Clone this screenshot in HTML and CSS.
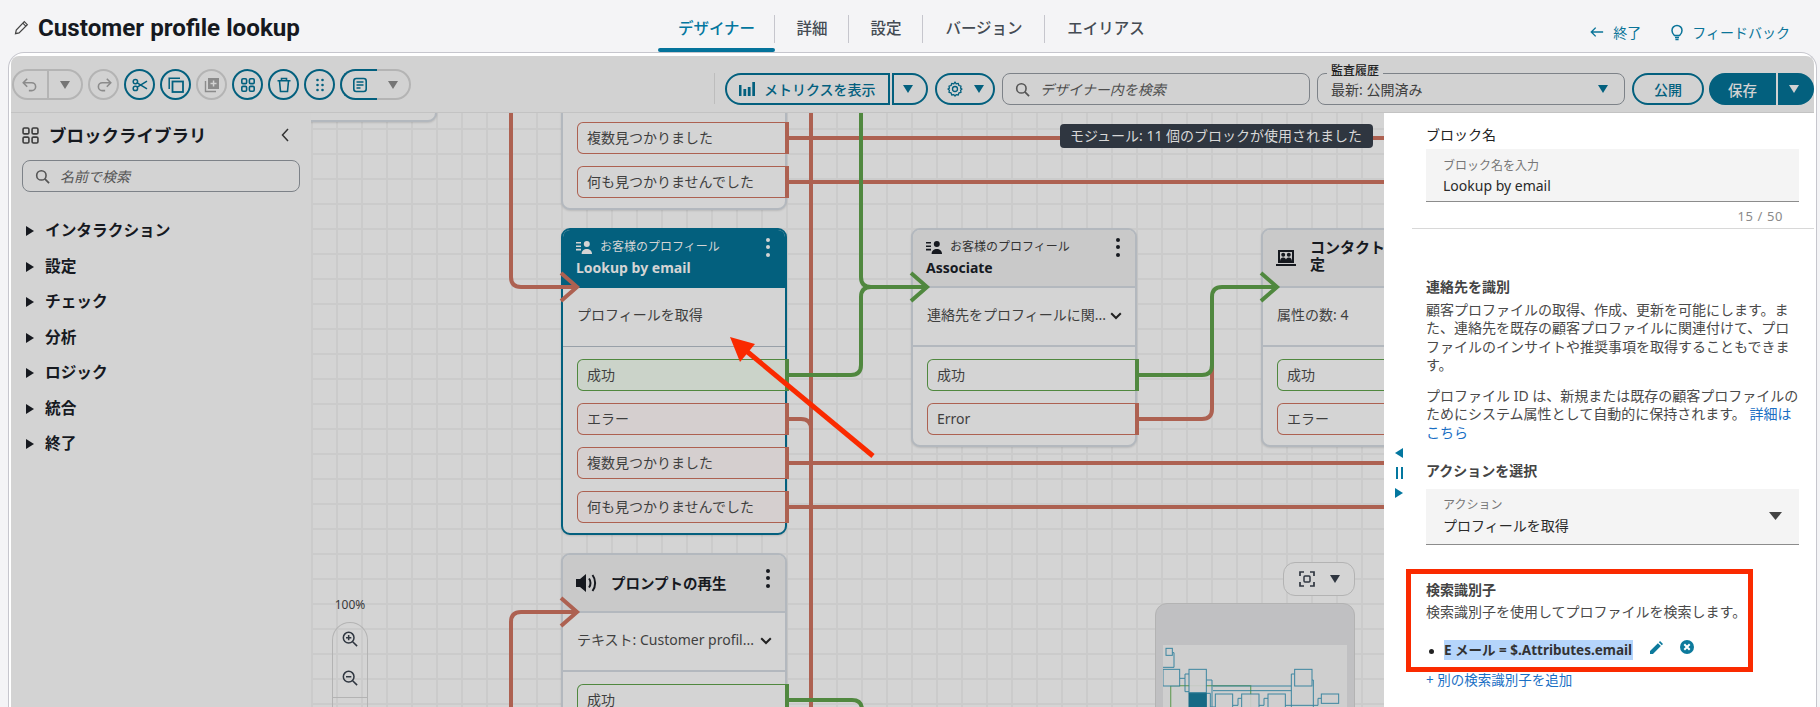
FILE: index.html
```html
<!DOCTYPE html>
<html lang="ja">
<head>
<meta charset="utf-8">
<title>Customer profile lookup</title>
<link rel="stylesheet" href="styles.css">
</head>
<body>
<svg class="defs" aria-hidden="true">
  <symbol id="i-person" viewBox="0 0 16 13"><path d="M0 1h5v1.6H0zM0 4.4h5V6H0zM0 7.8h5v1.6H0z"/><circle cx="10.8" cy="3" r="3"/><path d="M5.6 13c0-3.2 2.4-5 5.2-5s5.2 1.8 5.2 5z"/></symbol>
  <symbol id="i-search" viewBox="0 0 16 16"><circle cx="6.8" cy="6.8" r="5" fill="none" stroke="currentColor" stroke-width="1.7"/><path d="M10.5 10.5L15 15" stroke="currentColor" stroke-width="1.9" fill="none"/></symbol>
  <symbol id="i-tri" viewBox="0 0 10 8"><path d="M0 0h10L5 8z"/></symbol>
  <symbol id="i-chev" viewBox="0 0 12 8"><path d="M1.2 1.2L6 6l4.8-4.8" fill="none" stroke="currentColor" stroke-width="2"/></symbol>
</svg>

<header class="topbar">
  <div class="title-wrap">
    <svg class="title-pen" viewBox="0 0 16 16"><path d="M11 1.8l3.2 3.2L5.4 13.8 1.6 14.6l.8-3.8zM9.4 3.4l3.2 3.2" fill="none" stroke="#444" stroke-width="1.3"/></svg>
    <h1 class="title">Customer profile lookup</h1>
  </div>
  <nav class="tabs">
    <a class="tab active">デザイナー</a>
    <a class="tab">詳細</a>
    <a class="tab">設定</a>
    <a class="tab">バージョン</a>
    <a class="tab last">エイリアス</a>
  </nav>
  <div class="top-links">
    <a class="top-link"><svg viewBox="0 0 16 12"><path d="M15 6H2M6.5 1L1.5 6l5 5" fill="none" stroke="currentColor" stroke-width="1.6"/></svg>終了</a>
    <a class="top-link fb"><svg class="bulb" viewBox="0 0 12 17"><path d="M3.6 11.6C2.4 10.4 1 9.4 1 6.4a5 5 0 0 1 10 0c0 3-1.4 4-2.6 5.2zM4 13.4h4M4.4 15.6h3.2" fill="none" stroke="currentColor" stroke-width="1.5"/></svg>フィードバック</a>
  </div>
</header>

<main class="frame">
  <div class="toolbar">
    <div class="tb-left">
      <div class="split gray">
        <span class="seg"><svg class="ico-lg" viewBox="0 0 16 16"><path d="M5.500 2.500L2 6l3.500 3.500M2 6h7.500a3.500 3.500 0 0 1 0 7H7" fill="none" stroke="currentColor" stroke-width="1.400"/></svg></span>
        <span class="seg caret"><svg class="tri" viewBox="0 0 10 8"><use href="#i-tri"/></svg></span>
      </div>
      <span class="circle gray"><svg class="ico-lg" viewBox="0 0 16 16"><path d="M10.500 2.500L14 6l-3.500 3.500M14 6H6.500a3.500 3.500 0 0 0 0 7H9" fill="none" stroke="currentColor" stroke-width="1.400"/></svg></span>
      <span class="circle"><svg viewBox="0 0 16 16"><circle cx="3.400" cy="4.600" r="2.200" fill="none" stroke="currentColor" stroke-width="1.500"/><circle cx="3.400" cy="11.400" r="2.200" fill="none" stroke="currentColor" stroke-width="1.500"/><path d="M5.200 5.800L15 11.800M5.200 10.200L15 4.200" fill="none" stroke="currentColor" stroke-width="1.500"/></svg></span>
      <span class="circle"><svg viewBox="0 0 16 16"><path d="M1.200 12V1.200H12" fill="none" stroke="currentColor" stroke-width="1.500"/><rect x="4.500" y="4.500" width="10.500" height="10.500" fill="none" stroke="currentColor" stroke-width="1.800"/></svg></span>
      <span class="circle gray"><svg viewBox="0 0 16 16"><path d="M1.500 4v10.500H12" fill="none" stroke="currentColor" stroke-width="1.400"/><path fill="currentColor" fill-rule="evenodd" d="M4 1h11v11H4zM8.800 3.500v2.300H6.500v1.500h2.300v2.300h1.500V7.300h2.200V5.800h-2.200V3.500z"/></svg></span>
      <span class="circle"><svg viewBox="0 0 16 16"><g fill="none" stroke="currentColor" stroke-width="1.600"><rect x="1.800" y="1.800" width="4.800" height="4.800" rx="1.200"/><rect x="9.400" y="1.800" width="4.800" height="4.800" rx="1.200"/><rect x="1.800" y="9.400" width="4.800" height="4.800" rx="1.200"/><rect x="9.400" y="9.400" width="4.800" height="4.800" rx="1.200"/></g></svg></span>
      <span class="circle"><svg viewBox="0 0 16 16"><path d="M1.500 3.800h13M5.500 3.500V1.500h5v2M3.500 4l1 10.500h7l1-10.500" fill="none" stroke="currentColor" stroke-width="1.600"/></svg></span>
      <span class="circle"><svg viewBox="0 0 16 16"><g fill="currentColor"><circle cx="5.500" cy="3" r="1.300"/><circle cx="10.500" cy="3" r="1.300"/><circle cx="5.500" cy="8" r="1.300"/><circle cx="10.500" cy="8" r="1.300"/><circle cx="5.500" cy="13" r="1.300"/><circle cx="10.500" cy="13" r="1.300"/></g></svg></span>
      <div class="split notes">
        <span class="seg active"><svg viewBox="0 0 16 16"><rect x="1.800" y="1.500" width="12.400" height="13" rx="2.500" fill="none" stroke="currentColor" stroke-width="1.600"/><path d="M4.500 5h7M4.500 8h7M4.500 11h4" stroke="currentColor" stroke-width="1.400"/></svg></span>
        <span class="seg caret"><svg class="tri" viewBox="0 0 10 8"><use href="#i-tri"/></svg></span>
      </div>
    </div>
    <div class="tb-right">
      <span class="vsep"></span>
      <div class="metrics">
        <span class="m-main"><svg viewBox="0 0 16 14"><path fill="currentColor" d="M0 3h2.500v11H0zM4.400 7h2.800v7H4.400zM8.800 5h2.800v9H8.800zM13.300 0H16v14h-2.700z"/></svg>メトリクスを表示</span>
        <span class="m-drop"><svg class="tri" viewBox="0 0 10 8"><use href="#i-tri"/></svg></span>
      </div>
      <span class="gear"><svg viewBox="0 0 16 16"><path d="M8 1l1.200 1.800 2.100-.4.600 2.100 2.100.6-.4 2.100L15 8l-1.400 1.200.4 2.100-2.100.6-.6 2.100-2.100-.4L8 15l-1.200-1.400-2.100.4-.6-2.100-2.100-.6.4-2.100L1 8l1.400-.8-.4-2.100 2.100-.6.600-2.100 2.100.4z" fill="none" stroke="currentColor" stroke-width="1.300" stroke-linejoin="round"/><circle cx="8" cy="8" r="2.500" fill="none" stroke="currentColor" stroke-width="1.300"/></svg><svg class="tri" viewBox="0 0 10 8"><use href="#i-tri"/></svg></span>
      <div class="field search-main"><svg class="s-ico" viewBox="0 0 16 16"><use href="#i-search"/></svg><em>デザイナー内を検索</em></div>
      <div class="field audit"><span class="legend">監査履歴</span><span>最新: 公開済み</span><svg class="tri" viewBox="0 0 10 8"><use href="#i-tri"/></svg></div>
      <span class="publish">公開</span>
      <div class="save"><span class="save-main">保存</span><span class="save-drop"><svg class="tri" viewBox="0 0 10 8"><use href="#i-tri"/></svg></span></div>
    </div>
  </div>

  <div class="work">
    <aside class="library">
      <div class="lib-head">
        <svg class="lib-ico" viewBox="0 0 16 16"><g fill="none" stroke="currentColor" stroke-width="1.500"><rect x="1" y="1" width="5.500" height="5.500" rx="1.200"/><rect x="9.500" y="1" width="5.500" height="5.500" rx="1.200"/><rect x="1" y="9.500" width="5.500" height="5.500" rx="1.200"/><rect x="9.500" y="9.500" width="5.500" height="5.500" rx="1.200"/></g></svg>
        <h2>ブロックライブラリ</h2>
        <svg class="lib-back" viewBox="0 0 8 14"><path d="M7 1L1.500 7 7 13" fill="none" stroke="currentColor" stroke-width="1.500"/></svg>
      </div>
      <div class="lib-search"><svg class="s-ico" viewBox="0 0 16 16"><use href="#i-search"/></svg><em>名前で検索</em></div>
      <ul class="lib-list">
        <li>インタラクション</li>
        <li>設定</li>
        <li>チェック</li>
        <li>分析</li>
        <li>ロジック</li>
        <li>統合</li>
        <li>終了</li>
      </ul>
    </aside>

    <section class="canvas">
      <article class="node sliver"></article>

      <article class="node tail">
        <ul class="outs">
          <li class="out bad">複数見つかりました</li>
          <li class="out bad">何も見つかりませんでした</li>
        </ul>
      </article>

      <article class="node selected n-lookup">
        <header class="node-head">
          <div class="head-line"><svg class="ico-person"><use href="#i-person"/></svg><span class="node-type">お客様のプロフィール</span><span class="kebab"><i></i><i></i><i></i></span></div>
          <strong class="node-name">Lookup by email</strong>
        </header>
        <div class="node-body">プロフィールを取得</div>
        <ul class="outs">
          <li class="out ok tint">成功</li>
          <li class="out bad tint">エラー</li>
          <li class="out bad tint">複数見つかりました</li>
          <li class="out bad tint">何も見つかりませんでした</li>
        </ul>
      </article>

      <article class="node n-assoc">
        <header class="node-head">
          <div class="head-line"><svg class="ico-person"><use href="#i-person"/></svg><span class="node-type">お客様のプロフィール</span><span class="kebab"><i></i><i></i><i></i></span></div>
          <strong class="node-name">Associate</strong>
        </header>
        <div class="node-body split-body"><span>連絡先をプロフィールに関...</span><svg class="chev" viewBox="0 0 12 8"><use href="#i-chev"/></svg></div>
        <ul class="outs">
          <li class="out ok">成功</li>
          <li class="out bad">Error</li>
        </ul>
      </article>

      <article class="node n-attr">
        <header class="node-head single">
          <svg class="ico-attr" viewBox="0 0 20 16"><path d="M3 1h14v11H3z" fill="none" stroke="currentColor" stroke-width="2"/><circle cx="7.200" cy="4.800" r="2"/><circle cx="12.800" cy="4.800" r="2"/><path d="M4 11.500c0-2.500 1.400-4 3.200-4s3.200 1.500 3.200 4zM9.600 11.500c0-2.500 1.400-4 3.200-4s3.200 1.500 3.200 4zM0 14h20v2H0z"/></svg>
          <strong class="node-title attr-title">コンタクト属性を設定</strong>
        </header>
        <div class="node-body">属性の数: 4</div>
        <ul class="outs">
          <li class="out ok">成功</li>
          <li class="out bad">エラー</li>
        </ul>
      </article>

      <article class="node n-prompt">
        <header class="node-head single">
          <svg class="ico-sound" viewBox="0 0 22 22"><path d="M0 7h4l6-5v18l-6-5H0z"/><path d="M13 6.500c2 2.500 2 6.500 0 9M16.500 3c3.500 4.500 3.500 11.500 0 16" fill="none" stroke="currentColor" stroke-width="2"/></svg>
          <strong class="node-title">プロンプトの再生</strong>
          <span class="kebab"><i></i><i></i><i></i></span>
        </header>
        <div class="node-body split-body"><span>テキスト: Customer profil...</span><svg class="chev" viewBox="0 0 12 8"><use href="#i-chev"/></svg></div>
        <ul class="outs">
          <li class="out ok">成功</li>
        </ul>
      </article>

      <svg class="wires" viewBox="311 113 1073 594">
        <g class="red">
          <path d="M511 113V277Q511 287 521 287H576"/>
          <path d="M561 273L577 287L561 301"/>
          <path d="M811 113V707"/>
          <path d="M789 138H1384M789 182H1384"/>
          <path d="M789 419H801Q811 419 811 429"/>
          <path d="M789 463H1384M789 507H1384"/>
          <path d="M1139 419H1202Q1212 419 1212 409V365"/>
          <path d="M511 707V622Q511 612 521 612H576"/>
          <path d="M561 598L577 612L561 626"/>
        </g>
        <g class="green">
          <path d="M789 375H851Q861 375 861 365V297Q861 287 871 287H926"/>
          <path d="M861 113V277Q861 287 871 287"/>
          <path d="M911 273L927 287L911 301"/>
          <path d="M1139 375H1202Q1212 375 1212 365V297Q1212 287 1222 287H1276"/>
          <path d="M1261 273L1277 287L1261 301"/>
          <path d="M789 700H852Q862 700 862 710"/>
        </g>
      </svg>

      <div class="tooltip">モジュール: 11 個のブロックが使用されました</div>

      <div class="zoom-box">
        <span class="zoom-pct">100%</span>
        <div class="zoom-ctrl">
          <span><svg viewBox="0 0 18 18"><circle cx="7.500" cy="7.500" r="6" fill="none" stroke="currentColor" stroke-width="1.700"/><path d="M12 12l5 5M7.500 4.500v6M4.500 7.500h6" stroke="currentColor" stroke-width="1.700"/></svg></span>
          <span><svg viewBox="0 0 18 18"><circle cx="7.500" cy="7.500" r="6" fill="none" stroke="currentColor" stroke-width="1.700"/><path d="M12 12l5 5M4.500 7.500h6" stroke="currentColor" stroke-width="1.700"/></svg></span>
          <span class="zoom-rest"></span>
        </div>
      </div>

      <div class="fit-btn">
        <svg viewBox="0 0 16 16"><path d="M1 5V1h4M11 1h4v4M15 11v4h-4M5 15H1v-4" fill="none" stroke="currentColor" stroke-width="1.700"/><rect x="5" y="5" width="6" height="6" rx="1" fill="none" stroke="currentColor" stroke-width="1.500"/></svg>
        <svg class="tri" viewBox="0 0 10 8"><use href="#i-tri"/></svg>
      </div>

      <div class="minimap">
        <svg viewBox="190 285 552 186" preserveAspectRatio="none">
          <g class="mm-g"><rect x="213" y="407" width="240" height="70"/></g>
          <g class="mm-t">
            <path d="M218 308H223V352H190"/>
            <path d="M240 385H256V372H268M256 385V425H268"/>
            <path d="M320 390H337V471M340 408H575M340 422H575M575 372V471M575 372H585M637 390H641V471M555 466H655V445H665M320 430H332V471H347M400 466H415V445H426M478 466H493V445H505"/>
            <rect x="199" y="295" width="19" height="21" class="mm-b"/>
            <rect x="190" y="358" width="50" height="50" class="mm-b"/>
            <rect x="268" y="358" width="52" height="70" class="mm-b"/>
            <rect x="268" y="430" width="52" height="50" class="mm-on"/>
            <rect x="347" y="432" width="52" height="50" class="mm-b"/>
            <rect x="426" y="432" width="52" height="50" class="mm-b"/>
            <rect x="505" y="432" width="52" height="50" class="mm-b"/>
            <rect x="585" y="358" width="52" height="50" class="mm-b"/>
            <rect x="665" y="432" width="52" height="28" class="mm-b"/>
          </g>
        </svg>
      </div>

      <svg class="callout" viewBox="311 113 1073 594">
        <path class="callout-shaft" d="M873 456L744 349"/>
        <path class="callout-head" d="M730 337L755 344L740 362z"/>
      </svg>
    </section>

    <aside class="panel">
      <div class="grip">
        <svg viewBox="0 0 8 10"><path d="M8 0v10L0 5z"/></svg>
        <span class="grip-bars"></span>
        <svg viewBox="0 0 8 10"><path d="M0 0v10l8-5z"/></svg>
      </div>
      <div class="panel-sec name-sec">
        <label class="plain-label">ブロック名</label>
        <div class="filled-input">
          <span class="mini-label">ブロック名を入力</span>
          <span class="filled-value">Lookup by email</span>
        </div>
        <div class="counter">15 / 50</div>
      </div>
      <div class="panel-sec info-sec">
        <h3 class="sec-h">連絡先を識別</h3>
        <p class="para">顧客プロファイルの取得、作成、更新を可能にします。また、連絡先を既存の顧客プロファイルに関連付けて、プロファイルのインサイトや推奨事項を取得することもできます。</p>
        <p class="para second">プロファイル ID は、新規または既存の顧客プロファイルのためにシステム属性として自動的に保持されます。 <a class="link">詳細はこちら</a></p>
        <h3 class="sec-h act-h">アクションを選択</h3>
        <div class="filled-input select">
          <span class="mini-label">アクション</span>
          <span class="filled-value">プロフィールを取得</span>
          <svg class="tri sel-tri" viewBox="0 0 10 8" preserveAspectRatio="none"><use href="#i-tri"/></svg>
        </div>
        <div class="redbox">
          <h3 class="sec-h">検索識別子</h3>
          <p class="para">検索識別子を使用してプロファイルを検索します。</p>
          <div class="ident">
            <span class="bullet"></span>
            <span class="hl">E メール = $.Attributes.email</span>
            <svg class="ident-pen" viewBox="0 0 14 14"><path d="M0 14V10.800L8.500 2.300l3.200 3.200L3.200 14zM9.500 1.300L10.800 0 14 3.200l-1.300 1.300z"/></svg>
            <svg class="ident-x" viewBox="0 0 14 14"><circle cx="7" cy="7" r="7"/><path d="M4.300 4.300l5.400 5.400M9.700 4.300L4.300 9.700" stroke="#fff" stroke-width="2"/></svg>
          </div>
        </div>
        <a class="link add">+ 別の検索識別子を追加</a>
      </div>
    </aside>
  </div>
</main>
</body>
</html>
```

FILE: styles.css
```css
* { box-sizing: border-box; }
html, body { margin: 0; height: 707px; overflow: hidden; }
body {
  background: #f4f4f6;
  color: #16191f;
  font-family: "Noto Sans", "Noto Sans CJK JP", sans-serif;
  font-size: 14px;
  display: flex;
  flex-direction: column;
}
.defs { position: absolute; width: 0; height: 0; }
ul { list-style: none; margin: 0; padding: 0; }
h1, h2, h3, p { margin: 0; }
em { font-style: italic; }
.tri { width: 10px; height: 8px; fill: currentColor; flex: none; }

/* top bar */
.topbar { height: 52px; flex: none; display: flex; }
.title-wrap { width: 658px; display: flex; align-items: center; padding: 3px 0 0 14px; }
.title-pen { width: 15px; height: 15px; margin-right: 9px; }
.title { font: 700 24.200px/28px Roboto, "Noto Sans CJK JP", sans-serif; color: #16191f; white-space: nowrap; }
.tabs { display: flex; align-items: flex-start; }
.tab { height: 52px; width: 117px; padding-top: 17px; text-align: center; font-size: 15.500px; line-height: 22px; font-weight: 500; color: #444b53; position: relative; white-space: nowrap; }
.tab::after { content: ""; position: absolute; right: 0; top: 15px; height: 28px; width: 1px; background: #c6c6cd; }
.tab:nth-child(2), .tab:nth-child(3) { width: 74px; }
.tab:nth-child(4) { width: 122px; }
.tab.last { width: 122px; }
.tab.last::after { display: none; }
.tab.active { color: #03779f; }
.tab.active::before { content: ""; position: absolute; left: 0; right: 0; bottom: 0; height: 4px; border-radius: 2px; background: #04739b; }
.top-links { margin-left: auto; display: flex; gap: 30px; padding: 21px 30px 0 0; }
.top-link { display: flex; align-items: center; gap: 9px; height: 22px; color: #0a7499; font-size: 14px; white-space: nowrap; }
.top-link svg { width: 14px; height: 12px; }
.top-link .bulb { width: 12px; height: 17px; }

/* frame */
.frame { flex: 1; min-height: 0; margin-left: 8px; margin-right: 3px; border: 1px solid #c6c6cd; border-bottom: 0; border-radius: 16px 16px 0 0; background: #fff; padding: 3px 2px 0; display: flex; flex-direction: column; }

/* toolbar */
.toolbar { height: 57px; flex: none; background: #d2d2d2; border-bottom: 1px solid #c3c3c3; display: flex; justify-content: space-between; padding: 0 0 0 1px; border-radius: 8px 8px 0 0; }
.tb-left { display: flex; gap: 5px; padding-top: 13px; }
.tb-right { display: flex; gap: 7px; padding-top: 17px; }
.circle { width: 31px; height: 31px; border-radius: 50%; border: 2px solid #03607e; color: #03607e; display: flex; align-items: center; justify-content: center; }
.circle svg, .seg svg:not(.tri) { width: 16px; height: 16px; }
.circle svg.ico-lg, .seg svg.ico-lg { width: 18px; height: 18px; }
.circle.gray { border-color: #b4b4b4; color: #8b8b8b; }
.split { display: flex; height: 31px; border: 2px solid #b4b4b4; border-radius: 16px; color: #8b8b8b; width: 71px; }
.seg { display: flex; align-items: center; justify-content: center; flex: 1; }
.seg:first-child { border-right: 2px solid #b4b4b4; }
.seg.caret { color: #757575; }
.split.notes { position: relative; width: 71px; }
.split.notes .seg:first-child { margin: -2px 0 -2px -2px; border: 2px solid #03607e; border-right: 0; border-radius: 16px 0 0 16px; color: #03607e; flex: none; width: 37px; }
.vsep { width: 1px; height: 31px; background: #bdbdbd; margin-right: 3px; }
.metrics { display: flex; gap: 2px; color: #03607e; }
.m-main { width: 165px; height: 32px; border: 2px solid #03607e; border-radius: 16px 0 0 16px; display: flex; align-items: center; padding-left: 12px; gap: 9px; font-size: 14px; font-weight: 500; white-space: nowrap; }
.m-main svg { width: 16px; height: 14px; }
.m-drop { width: 36px; height: 32px; border: 2px solid #03607e; border-radius: 0 16px 16px 0; display: flex; align-items: center; justify-content: center; padding-right: 4px; }
.gear { width: 60px; height: 32px; border: 2px solid #03607e; border-radius: 16px; color: #03607e; display: flex; align-items: center; justify-content: center; gap: 11px; }
.gear svg:first-child { width: 16px; height: 16px; }
.field { height: 32px; border: 1px solid #7d8288; border-radius: 8px; display: flex; align-items: center; color: #4e4e4e; position: relative; white-space: nowrap; }
.search-main { width: 308px; padding-left: 12px; gap: 10px; }
.s-ico { width: 15px; height: 15px; flex: none; color: #555; }
.audit { width: 308px; padding: 0 16px 0 13px; justify-content: space-between; color: #3f3f3f; }
.audit .tri { color: #03607e; }
.legend { position: absolute; left: 9px; top: -10px; background: #d2d2d2; padding: 0 4px; font-size: 12px; line-height: 14px; font-weight: 500; color: #222; }
.publish { width: 72px; height: 32px; border: 2px solid #03607e; border-radius: 16px; display: flex; align-items: center; justify-content: center; color: #03607e; font-weight: 500; }
.save { display: flex; gap: 2px; margin-left: -2px; color: #d2d2d2; }
.save-main { width: 67px; height: 32px; background: #03607e; border-radius: 16px 0 0 16px; display: flex; align-items: center; justify-content: center; font-size: 14.500px; font-weight: 500; }
.save-drop { width: 36px; height: 32px; background: #03607e; border-radius: 0 16px 16px 0; display: flex; align-items: center; justify-content: center; padding-right: 4px; }

/* work area */
.work { flex: 1; min-height: 0; display: flex; }

/* library */
.library { width: 300px; flex: none; background: #d3d3d3; padding: 12px 11px 0 11px; }
.lib-head { display: flex; align-items: center; height: 20px; }
.lib-ico { width: 17px; height: 17px; color: #3c3c3c; }
.lib-head h2 { font-size: 17.500px; line-height: 20px; font-weight: 700; margin-left: 10px; white-space: nowrap; color: #16191f; }
.lib-back { width: 8px; height: 14px; margin-left: auto; margin-right: 11px; color: #333; }
.lib-search { height: 32px; margin-top: 15px; border: 1px solid #7d8288; border-radius: 8px; display: flex; align-items: center; gap: 10px; padding-left: 12px; color: #555; }
.lib-list { margin-top: 21px; }
.lib-list li { height: 35.500px; padding-left: 23px; position: relative; font-size: 15.700px; line-height: 35.500px; font-weight: 700; color: #16191f; }
.lib-list li::before { content: ""; position: absolute; left: 4px; top: 13px; border-left: 8px solid #16191f; border-top: 5px solid transparent; border-bottom: 5px solid transparent; }

/* canvas */
.canvas {
  flex: none; width: 1073px; position: relative; overflow: hidden;
  background-color: #d4d4d4;
  background-image: linear-gradient(#cbcbcb 2px, transparent 2px), linear-gradient(90deg, #cbcbcb 2px, transparent 2px);
  background-size: 25px 25px;
  background-position: 0 15px;
}
.node { position: absolute; width: 226px; background: #d4d4d4; border: 2px solid #b3b8be; border-radius: 9px; box-shadow: 0 1px 2px rgba(0,0,0,.12); }
.sliver { left: -20px; top: -40px; width: 146px; height: 49px; }
.tail { left: 250px; top: -60px; height: 157px; padding-top: 0; display: flex; flex-direction: column; justify-content: flex-end; }
.n-lookup { left: 250px; top: 115px; }
.n-assoc { left: 600px; top: 115px; }
.n-attr { left: 950px; top: 115px; }
.n-prompt { left: 250px; top: 440px; }
.selected { border-color: #03607e; }
.node-head { height: 58px; background: #c9c9c9; border-radius: 7px 7px 0 0; border-bottom: 2px solid #b3b8be; padding: 8px 15px 0 13px; color: #16191f; }
.selected .node-head { background: #03607e; border-bottom-color: #03607e; color: #d4d4d4; }
.node-head.single { display: flex; align-items: center; padding-top: 0; }
.head-line { display: flex; align-items: center; height: 18px; }
.ico-person { width: 16px; height: 13px; fill: currentColor; flex: none; margin-right: 8px; }
.node-type { font-size: 12px; line-height: 18px; white-space: nowrap; color: #333; }
.selected .node-type { color: #d4d4d4; }
.node-name { display: block; margin-top: 3px; font-size: 14px; line-height: 18px; font-weight: 700; }
.kebab { margin-left: auto; display: flex; flex-direction: column; gap: 3.500px; }
.kebab i { width: 4px; height: 4px; border-radius: 50%; background: currentColor; display: block; }
.single .kebab { margin-top: -10px; }
.node-title { font-size: 14.500px; line-height: 17px; font-weight: 700; }
.attr-title { width: 140px; margin: -4px 0 0 14px; font-size: 15px; }
.ico-attr { width: 20px; height: 16px; fill: currentColor; flex: none; }
.ico-sound { width: 22px; height: 22px; fill: currentColor; margin-right: 13px; flex: none; }
.node-body { height: 59px; border-bottom: 2px solid #b3b8be; padding: 17px 14px 0 14px; font-size: 14px; line-height: 20px; color: #3f3f3f; white-space: nowrap; overflow: hidden; }
.selected .node-body { border-bottom: 1px solid #98a0a8; }
.split-body { display: flex; justify-content: space-between; }
.chev { width: 12px; height: 8px; color: #222; margin-top: 7px; margin-right: -1px; }
.outs { display: flex; flex-direction: column; gap: 12px; padding: 12px 0 10px 14px; }
.out { width: 212px; height: 32px; border: 1px solid; border-right-width: 4px; border-radius: 6px 0 0 6px; padding-left: 9px; line-height: 30px; color: #3f3f3f; white-space: nowrap; }
.out.ok { border-color: #50883f; }
.out.bad { border-color: #ad6151; }
.out.ok.tint { background: #cbd3c9; }
.out.bad.tint { background: #d5cfcf; }
.wires, .callout { position: absolute; left: 0; top: 0; width: 1073px; height: 594px; }
.wires path { fill: none; stroke-width: 4; }
.red path { stroke: #ad6151; }
.green path { stroke: #50883f; }
.callout-shaft { stroke: #fa2a00; stroke-width: 5; fill: none; }
.callout-head { fill: #fa2a00; }
.tooltip { position: absolute; left: 749px; top: 11px; width: 313px; height: 24px; background: #2f3640; border-radius: 4px; color: #d8d8d8; font-size: 14px; line-height: 23px; padding-left: 10px; white-space: nowrap; }
.zoom-box { position: absolute; left: 21px; top: 484px; width: 36px; }
.zoom-pct { display: block; text-align: center; font-size: 12px; line-height: 16px; color: #3a3a3a; margin-left: -4px; margin-right: -4px; }
.zoom-ctrl { margin-top: 9px; border: 1px solid #b3b3b3; border-bottom: 0; border-radius: 18px 18px 0 0; height: 100px; display: flex; flex-direction: column; align-items: center; }
.zoom-ctrl span { height: 39px; flex: none; display: flex; align-items: center; justify-content: center; color: #2f3640; width: 100%; }
.zoom-ctrl span:first-child { margin-top: -4px; }
.zoom-ctrl svg { width: 16px; height: 16px; }
.zoom-ctrl .zoom-rest { border-top: 1px solid #b3b3b3; height: 30px; }
.fit-btn { position: absolute; left: 972px; top: 449px; width: 72px; height: 34px; border: 1px solid #b3b3b3; border-radius: 12px; display: flex; align-items: center; justify-content: center; gap: 15px; color: #2f3640; background: #d4d4d4; }
.fit-btn svg:first-child { width: 16px; height: 16px; }
.minimap { position: absolute; left: 844px; top: 490px; width: 200px; height: 110px; background: #c0c0c2; border: 1px solid #b3b3b3; border-radius: 12px 12px 0 0; padding: 41px 7px 0; }
.minimap svg { display: block; width: 184px; height: 62px; background: #cfcfcf; }
.mm-t { fill: none; stroke: #2d7f9c; stroke-width: 3; opacity: .9; }
.mm-g { fill: none; stroke: #76a46a; stroke-width: 4; }
.mm-b { fill: #d0d0d0; }
.mm-on { fill: #03607e; stroke: #03607e; }

/* panel */
.panel { flex: 1; min-width: 0; background: #fff; position: relative; color: #444; }
.grip { position: absolute; left: 10px; top: 335px; width: 10px; display: flex; flex-direction: column; align-items: center; gap: 9px; }
.grip svg { width: 8px; height: 10px; fill: #03779f; display: block; }
.grip-bars { width: 7px; height: 12px; border-left: 2px solid #03779f; border-right: 2px solid #03779f; }
.panel-sec { padding-left: 42px; }
.name-sec { margin-left: 28px; padding: 12px 14px 0 14px; border-bottom: 1px solid #d8d8d8; height: 116px; margin-right: 0; }
.plain-label { display: block; font-size: 14px; line-height: 20px; color: #222; }
.filled-input { margin-top: 4px; width: 373px; height: 53px; background: #f4f4f4; border-bottom: 1px solid #8c8c8c; padding: 8px 16px 0 17px; display: flex; flex-direction: column; }
.mini-label { font-size: 12px; line-height: 18px; color: #777; white-space: nowrap; }
.filled-value { font-size: 14px; line-height: 22px; color: #2a2a2a; white-space: nowrap; }
.counter { width: 357px; text-align: right; margin-top: 6px; font-size: 13px; line-height: 16px; color: #8a8a8a; letter-spacing: .6px; }
.info-sec { padding-top: 48px; }
.sec-h { font-size: 14px; line-height: 20px; font-weight: 700; color: #444; white-space: nowrap; }
.para { margin-top: 4px; width: 374px; font-size: 14px; line-height: 18.300px; color: #4a4a4a; }
.para.second { margin-top: 13px; }
.link { color: #1a6fc4; }
.act-h { margin-top: 19px; }
.select { margin-top: 8px; height: 56px; position: relative; padding-top: 7px; }
.select .filled-value { line-height: 24px; }
.sel-tri { position: absolute; right: 17px; top: 23px; width: 13px; height: 8px; color: #444; }
.redbox { margin: 24px 0 0 -20px; width: 347px; height: 103px; border: 5px solid #fa2a00; padding: 6px 0 0 15px; }
.redbox .para { margin-top: 3px; width: auto; white-space: nowrap; }
.ident { display: flex; align-items: center; margin-top: 19px; height: 20px; }
.bullet { width: 5px; height: 5px; border-radius: 50%; background: #222; margin-left: 3px; margin-top: 2px; }
.hl { margin-left: 10px; width: 189px; height: 20px; background: #b5d5fb; font-size: 13.500px; line-height: 20px; font-weight: 700; color: #333; white-space: nowrap; }
.ident-pen { width: 13px; height: 13px; margin-left: 17px; margin-top: -5px; fill: #0d7a9c; }
.ident-x { width: 14px; height: 14px; margin-left: 17px; margin-top: -6px; fill: #0d7a9c; }
.add { display: block; margin-top: 0; font-size: 13.500px; line-height: 17px; }
```
